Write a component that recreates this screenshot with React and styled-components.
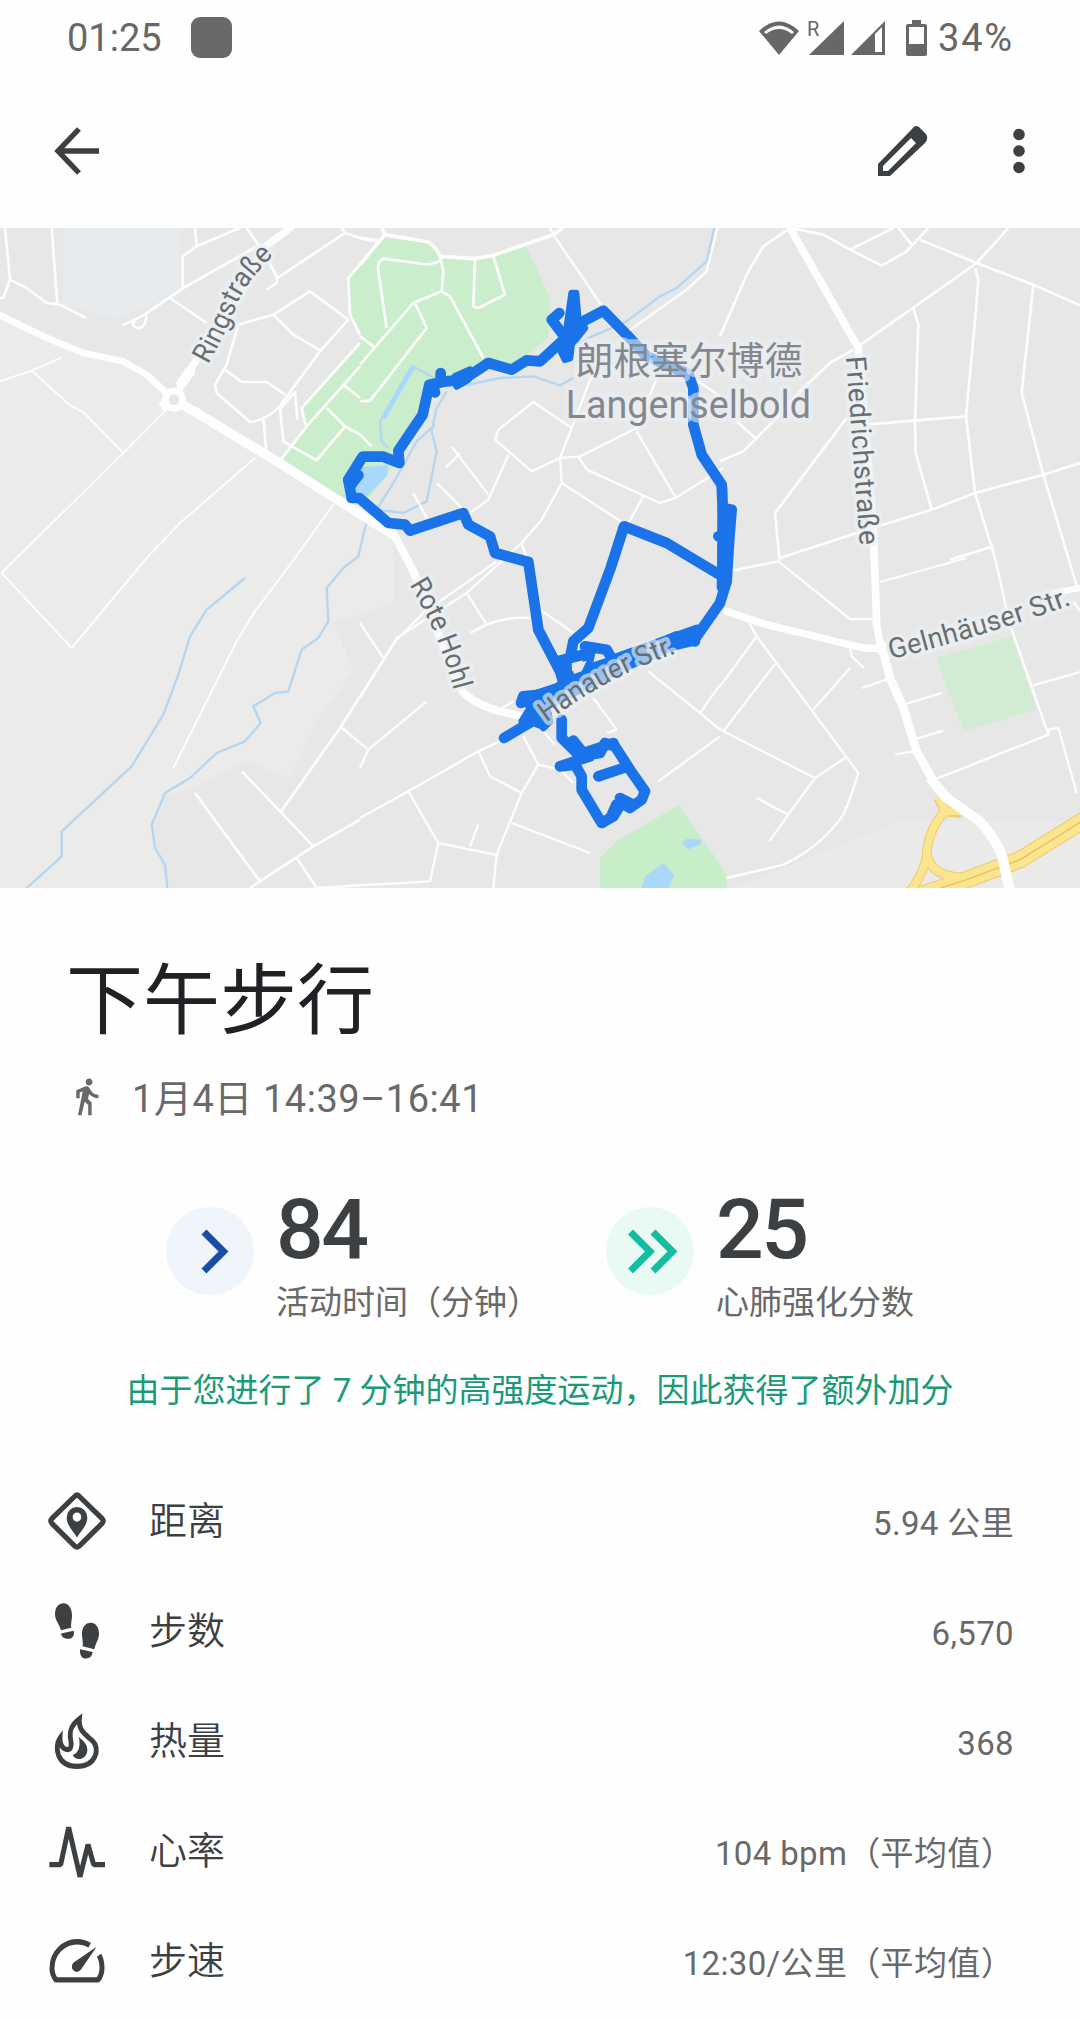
import React from 'react';
import styled, { createGlobalStyle } from 'styled-components';

const GlobalStyle = createGlobalStyle`
  * { box-sizing: border-box; }
  body {
    margin: 0;
    background: #fefefe;
    font-family: Roboto, "Noto Sans CJK SC", sans-serif;
  }
  svg { display: block; flex: none; overflow: visible; }
`;

const Screen = styled.main`
  display: flex;
  flex-direction: column;
  width: 1080px;
  height: 2020px;
  overflow: hidden;
  background: #fefefe;
`;

const StatusBar = styled.header`
  display: flex;
  align-items: center;
  justify-content: space-between;
  height: 75px;
  padding: 0 66px 0 67px;
  color: #676767;
`;

const StatusGroup = styled.div`
  display: flex;
  align-items: center;
  gap: ${(p) => p.$gap}px;
`;

const NotificationDot = styled.span`
  width: 41px;
  height: 41px;
  border-radius: 9px;
  background: #696969;
`;

const StatusText = styled.span`
  font-size: 38px;
  line-height: 44px;
  letter-spacing: ${(p) => p.$spacing}px;
`;

const AppBar = styled.nav`
  display: flex;
  align-items: center;
  justify-content: space-between;
  height: 153px;
  padding: 0 31px 2px 47px;
  color: #3c4043;
`;

const IconButton = styled.button`
  display: flex;
  align-items: center;
  justify-content: center;
  width: 60px;
  height: 60px;
  padding: 0;
  border: 0;
  background: none;
  color: inherit;
`;

const Actions = styled.div`
  display: flex;
  gap: 56px;
`;

const MapFrame = styled.section`
  height: 660px;
  overflow: hidden;
`;

const Heading = styled.section`
  padding: 69px 66px 0;
`;

const Title = styled.h1`
  margin: 0;
  font-size: 77px;
  font-weight: 400;
  line-height: 90px;
  color: #202124;
`;

const Subtitle = styled.p`
  display: flex;
  align-items: center;
  gap: 25px;
  margin: 27px 0 0;
  height: 50px;
  font-size: 38px;
  line-height: 50px;
  letter-spacing: 0.55px;
  color: #696969;

  svg { margin-bottom: 6px; }
`;

const Metrics = styled.section`
  display: flex;
  height: 140px;
  margin-top: 59px;
  padding-left: 166px;
`;

const Metric = styled.article`
  display: flex;
  gap: 22px;
  width: 440px;
`;

const Badge = styled.span`
  display: flex;
  align-items: center;
  justify-content: center;
  flex: none;
  width: 88px;
  height: 88px;
  margin-top: 24px;
  border-radius: 50%;
  background: ${(p) => p.$tint};
`;

const MetricText = styled.div`
  display: flex;
  flex-direction: column;
  padding-top: 2px;
`;

const MetricValue = styled.strong`
  font-size: 84px;
  font-weight: 500;
  line-height: 90px;
  letter-spacing: -2.500px;
  color: #3c4043;
`;

const MetricLabel = styled.span`
  margin-top: 8px;
  font-size: 33px;
  line-height: 40px;
  color: #696969;
  white-space: nowrap;
`;

const BonusNote = styled.p`
  margin: 48px 0 0;
  height: 40px;
  font-size: 33px;
  line-height: 40px;
  text-align: center;
  color: #1b9a79;
  white-space: nowrap;
`;

const StatList = styled.ul`
  margin: 55px 0 0;
  padding: 0;
  list-style: none;
`;

const StatRow = styled.li`
  display: flex;
  align-items: center;
  height: 110px;
  padding: 0 66px 0 47px;
  color: #3c4043;
`;

const StatLabel = styled.span`
  flex: 1;
  margin-left: 42px;
  font-size: 38px;
  font-weight: 350;
  line-height: 50px;
`;

const StatValue = styled.span`
  padding-top: 5px;
  font-size: 33px;
  line-height: 44px;
  letter-spacing: 0.35px;
  color: #696969;
`;

const WifiIcon = () => (
  <svg width="42" height="36" viewBox="0 0 42 36">
    <path d="M21 35 1 11Q21-8 41 11Z" fill="#676767" />
    <path d="M6 12Q21-1 36 12L34 14Q21 4 8 14Z" fill="#fefefe" />
  </svg>
);

const SignalIcons = () => (
  <svg width="78" height="37" viewBox="0 0 78 37" fill="#676767">
    <text x="-1" y="17" fontSize="20">R</text>
    <path d="M1 36 36 2V36Z" />
    <path d="M43 36 77 2V36Z" />
    <path d="M67 15 74 8V33H67Z" fill="#fefefe" />
  </svg>
);

const BatteryIcon = () => (
  <svg width="21" height="36" viewBox="0 0 21 36" fill="#676767">
    <path d="M6 0H15V4H19Q21 4 21 6V34Q21 36 19 36H2Q0 36 0 34V6Q0 4 2 4H6Z" />
    <path d="M3 7H18V24H3Z" fill="#fefefe" />
  </svg>
);

const BackIcon = () => (
  <svg width="60" height="60" viewBox="0 0 60 60" fill="none" stroke="#3c4043" strokeWidth="5.4">
    <path d="M32 8 11 30 32 52M11 30H52" />
  </svg>
);

const PencilIcon = () => (
  <svg width="60" height="60" viewBox="0 0 60 60" fill="#3c4043">
    <path
      fillRule="evenodd"
      d="M5 55V43L39 8Q42 3 46 6L53 13Q56 17 52 22L17 55ZM10 45V50H15L43 22 38 17Z"
    />
  </svg>
);

const MoreIcon = () => (
  <svg width="14" height="60" viewBox="0 0 14 60" fill="#3c4043">
    <circle cx="7" cy="13.5" r="5.8" />
    <circle cx="7" cy="30" r="5.8" />
    <circle cx="7" cy="46.5" r="5.8" />
  </svg>
);

const WalkIcon = () => (
  <svg width="41" height="41" viewBox="0 0 24 24" fill="#696969">
    <path d="M13.5 5.5c1.1 0 2-.9 2-2s-.9-2-2-2-2 .9-2 2 .9 2 2 2zM9.8 8.9L7 23h2.1l1.8-8 2.1 2v6h2v-7.5l-2.1-2 .6-3C14.8 12 16.8 13 19 13v-2c-1.9 0-3.5-1-4.3-2.4l-1-1.6c-.4-.6-1-1-1.7-1-.3 0-.5.1-.8.1L6 8.3V13h2V9.6l1.8-.7" />
  </svg>
);

const ChevronIcon = () => (
  <svg width="88" height="88" viewBox="0 0 88 88" fill="none" stroke="#174ea6" strokeWidth="7">
    <path d="M38 25 57.5 44.5 38 64" />
  </svg>
);

const DoubleChevronIcon = () => (
  <svg width="88" height="88" viewBox="0 0 88 88" fill="none" stroke="#12bda0" strokeWidth="7">
    <path d="M24.5 25 44 44.5 24.5 64M47 25 66.5 44.5 47 64" />
  </svg>
);

const StatSvg = ({ children }) => (
  <svg width="60" height="60" viewBox="0 0 180 168" preserveAspectRatio="none" fill="#3c4043">
    {children}
  </svg>
);

const stroke = { fill: 'none', stroke: '#3c4043' };

const DistanceIcon = () => (
  <StatSvg>
    <path d="M83 15Q90 8 97 15L165 77Q172 84 165 91L97 154Q90 160 83 154L15 91Q8 84 15 77Z" {...stroke} strokeWidth="15" />
    <path
      fillRule="evenodd"
      d="M90 130C78 112 59 96 59 74A31 29 0 0 1 121 74C121 96 102 112 90 130ZM90 60A13 13 0 1 0 90 86A13 13 0 0 0 90 60Z"
    />
  </StatSvg>
);

const StepsIcon = () => (
  <StatSvg>
    <path d="M42 82C38 66 24 55 24 36C24 18 34 6 50 6C66 6 75 22 75 40C75 55 71 62 73 75Z" />
    <path d="M42 91 80 83C84 98 74 106 64 106C50 106 44 100 42 91Z" />
    <path d="M107 127C109 110 104 102 105 88C107 70 118 61 132 61C148 61 156 76 156 92C156 108 146 118 142 135Z" />
    <path d="M99 135 137 143C135 156 128 161 117 161C104 161 98 152 99 135Z" />
  </StatSvg>
);

const CaloriesIcon = () => (
  <StatSvg>
    <path
      d="M97 22C76 37 65 53 71 80C75 98 71 108 62 108C49 108 38 96 39 76C22 98 27 155 90 155C148 155 160 104 137 84C119 68 94 57 97 22Z"
      {...stroke}
      strokeWidth="14.5"
    />
    <path d="M106 6 91 25 100 36ZM43 60 31 78 44 84Z" />
    <path d="M95 72C101 92 98 118 77 123C86 142 120 137 121 109C121 91 108 84 95 72Z" />
  </StatSvg>
);

const HeartRateIcon = () => (
  <StatSvg>
    <path d="M7 122H41L65 18 99 156 123 66 140 122H174" {...stroke} strokeWidth="15" strokeLinejoin="bevel" />
  </StatSvg>
);

const PaceIcon = () => (
  <StatSvg>
    <path
      d="M128 40Q111 30 90 30A75 74 0 0 0 15 104Q15 122 27 137H153Q165 122 165 104Q165 82 156 68"
      {...stroke}
      strokeWidth="15"
      strokeLinejoin="round"
    />
    <path d="M149 44 102 108A15 15 0 1 1 80 88Z" />
  </StatSvg>
);

/* The map is drawn on a 3240 x 1980 canvas, split into six 1080 x 990 tiles. */
const Tile = ({ col, row, children }) => (
  <g transform={`translate(${col * 1080} ${row * 990})`}>{children}</g>
);

const MapLabel = ({ path, length, children }) => (
  <text
    fontSize="84"
    fill="#686d70"
    stroke="#ecf1f4"
    strokeOpacity="0.65"
    strokeWidth="24"
    strokeLinejoin="round"
    paintOrder="stroke"
  >
    <textPath href={`#${path}`} textLength={length} lengthAdjust="spacingAndGlyphs">
      {children}
    </textPath>
  </text>
);

const RouteMap = () => (
  <svg width="1080" height="660" viewBox="0 0 3240 1980" fill="none" strokeLinejoin="round">
    <defs>
      <path id="ringstrasse" d="M624 410Q690 292 714 222Q748 152 818 84" />
      <path id="friedrichstrasse" d="M2538 386 2580 960" />
      <path id="rote-hohl" d="M1228 1070Q1320 1220 1365 1400" />
      <path id="gelnhaeuser" d="M2672 1294Q2940 1228 3226 1126" />
      <path id="hanauer" d="M1640 1484Q1830 1340 2040 1272" />
    </defs>

    <rect width="3240" height="1980" fill="#e7e7e8" />
    <path d="M190 0H540V200L350 270 190 230Z" fill="#e8ebee" />
    <path
      d="M0 265 130 325 250 375 370 400 522 515 830 700 1080 860 1180 930 1180 1130 1000 1180 1060 1330 950 1480 870 1650 740 1600 560 1690 495 1700 455 1790 500 1980H0Z"
      fill="#ebebe9"
    />
    <path d="M2200 1980 2700 1780 3240 1780V1980Z" fill="#eaeae9" />
    <path
      d="M835 705 920 590 905 545 1090 330 1055 260 1045 150 1155 30 1290 45 1320 85 1420 92 1575 50 1605 110 1650 210 1645 330 1560 400 1300 460 1200 690 1100 820 1000 800Z"
      fill="#caeecb"
    />
    <path d="M1070 720 1165 710 1160 745 1095 810 1050 800Z" fill="#a8d8fb" />
    <path d="M2808 1290 3035 1225 3110 1445 2890 1510Z" fill="#d1ecd2" />
    <path d="M1800 1980V1890L1850 1840 2035 1732 2140 1880 2180 1940V1980Z" fill="#c8edc9" />
    <path d="M1925 1980 1935 1945 1990 1905 2022 1940 2005 1980ZM2045 1845 2060 1832 2105 1835 2100 1850 2065 1864Z" fill="#a9d8fb" />

    <g stroke="#b5d6f0" strokeWidth="7">
      <path d="M2143 0 2120 100 2030 180 1980 205 1880 280 1720 350" />
      <path d="M1720 450 1680 472 1600 445 1500 450 1380 475 1310 455 1240 415 1210 465 1140 580 1145 640 1165 660" />
      <path d="M1340 490 1310 540 1295 610 1310 670 1280 820 1210 855 1130 845 1180 765 1250 640 1305 590" />
      <path d="M1100 880 1075 985 1030 1020 980 1080 985 1180 955 1230 905 1265 865 1390 825 1395 760 1435 782 1485 735 1540 650 1575 570 1650 495 1695 455 1790 465 1860 495 1910 502 1980" />
      <path d="M735 1050 620 1145 570 1225 535 1340 490 1460 395 1615 185 1810V1885L80 1980" />
    </g>
    <path d="M1240 415 1210 465 1150 570" stroke="#a8d8fb" strokeWidth="15" />

    <g stroke="#fdfdfd" strokeWidth="8">
      <Tile col={0} row={0}>
        <path d="M15 0 30 155 10 210H0M30 155 80 180 140 225 180 230 258 270M155 0 172 228" />
        <path d="M585 0 590 55 548 85V180M590 55 720 0M740 0 775 50M368 292 430 262 550 180 780 50M440 262Q435 305 410 300Q390 290 405 278" />
        <path d="M510 210 620 285M800 90 832 150 1035 15 1025 0M832 150 830 165 800 185M1035 15 1080 30" />
        <path d="M715 290 820 260 930 190 1045 275 960 370 835 540Q790 580 750 582L650 495 645 470 680 410 715 290M820 260 880 320 962 368M675 425 725 462H800L855 500M1080 110 1045 150 1050 260 1080 320M1080 345 905 540 918 595M885 490 892 575M885 490 840 545 850 640 950 697 1035 595 1080 620M790 575 800 680M835 705 920 595 1080 415M980 540 1035 595M1030 470 1080 510" />
        <path d="M0 460 95 428 185 388M95 428 210 532 250 552 370 675M500 545 370 675 50 990 5 1035 215 1260 440 990 540 885 765 690M1000 830 885 990 765 1150 710 1240 520 1620" strokeWidth="6" />
        <path d="M560 530 800 675" strokeWidth="5" />
      </Tile>
      <Tile col={1} row={0}>
        <path d="M0 110 75 20 205 42Q235 65 240 85L345 92 400 82 580 20 610 0M75 20 65 0M0 30 60 40" strokeWidth="11" />
        <path d="M240 85 250 130 245 190 160 225 0 410M240 98Q210 115 170 105L70 92Q50 100 55 130L80 300M165 225 200 300 30 518 0 520M0 325 40 355M245 190 270 205 370 390M345 92 340 235 355 240 435 200 400 85M0 620 35 655" />
        <path d="M570 0 580 20 730 240M1072 0 1040 130 980 185 790 320M700 430 635 600 600 690 605 765 545 875 485 945 320 1095 110 1230 0 1410M485 945 500 990M405 635 415 605 520 522 635 600M405 635 515 730 600 690 660 685 830 600 890 450M330 855 385 815 445 680M275 655 385 800M300 675 258 718M230 765 310 845M160 795 200 870M655 685 680 725 900 825 950 808 1090 720M830 610 945 805M605 765 790 885M850 805 800 895M1000 450 1080 505" strokeWidth="7" />
      </Tile>
      <Tile col={2} row={0}>
        <path d="M210 0 130 55 85 130 0 325M210 0 310 20 390 65 485 113 560 70 625 0M390 65 520 0M535 0 575 50M600 35 770 105 940 170 1080 232M865 0 770 105 415 355M765 120 775 155 765 280 738 565 765 795 825 990M580 240 595 290 585 580 587 675 635 845M940 170 905 495 970 740 1045 990M400 365 330 405 250 480 160 580 70 670 0 700M50 580 105 630M435 590 738 565M380 570 165 855 178 990M180 990 440 905 635 845 765 795 970 740 1080 705M690 995 820 955" />
      </Tile>
      <Tile col={0} row={1}>
        <path d="M1080 415 1020 510 842 762M725 640 842 762 940 865M1020 505 1080 555M750 990 780 970 940 865 1080 785M585 705 780 970M890 900 950 990M950 990 1080 982" />
      </Tile>
      <Tile col={1} row={1}>
        <path d="M0 780 145 700 355 580 430 545M0 415 110 245 190 165 410 10M320 105 380 200M330 225 380 200Q440 175 510 180M540 155 640 225M0 195 70 300M0 630 25 575 0 555M25 575 200 430M425 450 460 430M355 580 390 655 485 705M490 535 535 620 485 705 410 890 400 990M535 620 600 635 640 675M145 700 235 855 415 892M235 855 210 970 0 982M330 865 355 800M455 795 690 885M550 520 585 560M700 420 770 515 740 525M865 340 1020 465 1080 515M1020 465 1080 380M895 670 1080 535" strokeWidth="7" />
      </Tile>
      <Tile col={2} row={1}>
        <path d="M0 45 175 10 390 183H465M180 0 175 10M480 72 740 0M85 190 110 235 415 645Q400 700 370 770Q300 870 190 920L20 960M110 235 0 385M165 318 10 520 285 660 375 600M0 510 10 520M285 660 205 770 148 850M110 720 205 770M280 455 390 330M390 270 395 295 432 330M425 390 500 365M550 440 665 405M590 542 670 518M525 590 580 580M650 662 985 530M825 0 870 200 985 530V515L1015 510 1070 705M940 382 1080 342M1045 0 1075 100M1060 130 1080 160" strokeWidth="7" />
      </Tile>
    </g>

    <g stroke="#fefefe" strokeLinecap="round">
      <path d="M0 262 130 325 250 375 370 400 440 440 522 515" strokeWidth="20" />
      <path d="M522 515 600 560 830 700 1080 858 1180 920" strokeWidth="28" />
      <path d="M1180 915 1240 1030 1380 1380Q1420 1440 1570 1465" strokeWidth="24" />
      <path d="M522 515 580 410 720 200 790 60 870 0" strokeWidth="22" />
      <path d="M545 465 570 430" strokeWidth="32" />
      <path d="M2370 0 2575 360 2620 900 2630 1190 2645 1270" strokeWidth="23" />
      <path d="M2180 1150 2300 1190 2590 1260 2645 1262" strokeWidth="22" />
      <path d="M2645 1250 2670 1350 2710 1440 2750 1570 2800 1660" strokeWidth="26" />
      <path d="M3160 1095 3240 1080" strokeWidth="18" />
    </g>
    <path d="M485 540Q505 525 520 490" stroke="#fefefe" strokeWidth="30" />
    <circle cx="522" cy="515" r="26" fill="#e7e7e8" stroke="#fefefe" strokeWidth="20" />

    <g stroke="#edca72" strokeWidth="29">
      <path d="M2815 1710 2835 1750Q2780 1810 2780 1890Q2760 1960 2720 2000" />
      <path d="M2835 1750 2885 1755M2785 1890Q2800 1950 2910 1950" />
      <path d="M2700 2020 2900 1955 3060 1895 3270 1765" strokeWidth="52" />
    </g>
    <g stroke="#fbe58f" strokeWidth="23">
      <path d="M2815 1705 2835 1750Q2780 1810 2780 1890Q2760 1960 2720 2000" />
      <path d="M2835 1750 2890 1750M2785 1890Q2800 1950 2910 1950" />
      <path d="M2700 2020 2900 1955 3060 1895 3270 1765" strokeWidth="46" />
    </g>
    <path d="M2700 2020 2900 1955 3060 1895 3270 1765" stroke="#e5c15f" strokeWidth="4" />
    <path d="M2790 1650 2840 1710 2940 1780Q3000 1850 3010 1900L3030 1990" stroke="#fefefe" strokeWidth="30" />

    <g stroke="#1a73e8" strokeWidth="32" strokeLinecap="round">
      <path d="M1075 742 1050 775 1045 755 1088 686H1150L1198 705 1195 668 1268 560 1288 470 1340 460 1390 455 1465 405 1535 425 1580 397 1620 400 1680 345 1740 285 1810 248 1880 320 1940 385 2065 438 2080 480 2080 590 2105 680 2165 770 2168 840 2195 845 2188 930 2180 1060 2160 1125 2090 1225" />
      <path d="M1045 755 1055 810 1078 810 1165 885 1215 890 1230 908 1390 855 1405 890 1470 925 1485 975 1585 1002 1615 1205 1680 1330 1695 1380" />
      <path d="M2175 1050 2000 945 1872 895 1832 1020 1765 1200 1720 1240 1710 1290 1680 1305" />
      <path d="M2175 925H2155M2168 840V1060M1322 435V450M1305 493 1300 475" />
      <path d="M1512 1530 1600 1478 1632 1490M1585 1460 1640 1430 1850 1325 2090 1220" />
      <path d="M2085 1240 2030 1225 1950 1260M1670 1395 1570 1405 1563 1425" />
      <path d="M1670 1300 1770 1275 1755 1255 1820 1265 1840 1300M1770 1275 1760 1320 1700 1360" />
      <path d="M1685 1475V1530L1740 1585 1800 1575 1815 1545 1845 1555 1890 1625 1935 1690 1925 1715 1890 1740 1865 1725 1840 1765 1805 1785 1745 1685V1645L1725 1610 1680 1615 1770 1585M1795 1645 1870 1620" />
      <path d="M1720 1538 1750 1575 1840 1545M1900 1730 1860 1710" />
      <path d="M1678 255 1655 275 1700 335" />
    </g>
    <g fill="#1a73e8" stroke="#1a73e8" strokeWidth="20">
      <path d="M1715 195 1728 195 1735 275 1755 300 1715 350 1710 390 1695 395 1675 355 1700 300Z" />
      <path d="M1365 445 1410 425 1405 455 1370 475Z" />
      <path d="M1672 1295 1705 1300 1708 1375 1685 1370Z" />
      <path d="M1850 1285 2090 1200 2075 1245 1970 1270 1870 1315Z" />
      <path d="M1565 1410 1670 1375 1760 1320 1850 1290 1860 1310 1640 1430 1600 1470 1565 1480 1590 1440Z" />
      <path d="M1600 1430 1635 1410 1650 1480 1630 1500Z" />
      <path d="M1820 1780 1845 1725 1865 1720 1840 1765Z" />
      <path d="M2165 780H2172V1040L2160 1080Z" />
    </g>
    <path d="M1715 1312 1760 1298 1745 1330 1722 1338Z" fill="#e7e7e8" />

    <MapLabel path="ringstrasse" length="386">Ringstraße</MapLabel>
    <MapLabel path="friedrichstrasse" length="568">Friedrichstraße</MapLabel>
    <MapLabel path="rote-hohl" length="346">Rote Hohl</MapLabel>
    <MapLabel path="gelnhaeuser" length="568">Gelnhäuser Str.</MapLabel>
    <MapLabel path="hanauer" length="444">Hanauer Str.</MapLabel>
    <g
      fill="#85878e"
      stroke="#ecf1f4"
      strokeOpacity="0.58"
      strokeWidth="28"
      paintOrder="stroke"
      fontSize="113"
    >
      <text x="1727" y="438" textLength="680">朗根塞尔博德</text>
      <text x="1697" y="570" fontSize="115" textLength="736" lengthAdjust="spacingAndGlyphs">Langenselbold</text>
    </g>
  </svg>
);

const stats = [
  { label: '距离', value: '5.94 公里', Icon: DistanceIcon },
  { label: '步数', value: '6,570', Icon: StepsIcon },
  { label: '热量', value: '368', Icon: CaloriesIcon },
  { label: '心率', value: '104 bpm（平均值）', Icon: HeartRateIcon },
  { label: '步速', value: '12:30/公里（平均值）', Icon: PaceIcon },
];

export default function App() {
  return (
    <>
      <GlobalStyle />
      <Screen>
        <StatusBar>
          <StatusGroup $gap={29}>
            <StatusText $spacing={0}>01:25</StatusText>
            <NotificationDot />
          </StatusGroup>
          <StatusGroup $gap={20}>
            <StatusGroup $gap={8}>
              <WifiIcon />
              <SignalIcons />
            </StatusGroup>
            <StatusGroup $gap={11}>
              <BatteryIcon />
              <StatusText $spacing={1.8}>34%</StatusText>
            </StatusGroup>
          </StatusGroup>
        </StatusBar>

        <AppBar>
          <IconButton aria-label="返回"><BackIcon /></IconButton>
          <Actions>
            <IconButton aria-label="修改"><PencilIcon /></IconButton>
            <IconButton aria-label="更多"><MoreIcon /></IconButton>
          </Actions>
        </AppBar>

        <MapFrame><RouteMap /></MapFrame>

        <Heading>
          <Title>下午步行</Title>
          <Subtitle>
            <WalkIcon />
            <span>1月4日 14:39–16:41</span>
          </Subtitle>
        </Heading>

        <Metrics>
          <Metric>
            <Badge $tint="#f0f4fb"><ChevronIcon /></Badge>
            <MetricText>
              <MetricValue>84</MetricValue>
              <MetricLabel>活动时间（分钟）</MetricLabel>
            </MetricText>
          </Metric>
          <Metric>
            <Badge $tint="#e9faf5"><DoubleChevronIcon /></Badge>
            <MetricText>
              <MetricValue>25</MetricValue>
              <MetricLabel>心肺强化分数</MetricLabel>
            </MetricText>
          </Metric>
        </Metrics>

        <BonusNote>由于您进行了 7 分钟的高强度运动，因此获得了额外加分</BonusNote>

        <StatList>
          {stats.map(({ label, value, Icon }) => (
            <StatRow key={label}>
              <Icon />
              <StatLabel>{label}</StatLabel>
              <StatValue>{value}</StatValue>
            </StatRow>
          ))}
        </StatList>
      </Screen>
    </>
  );
}
